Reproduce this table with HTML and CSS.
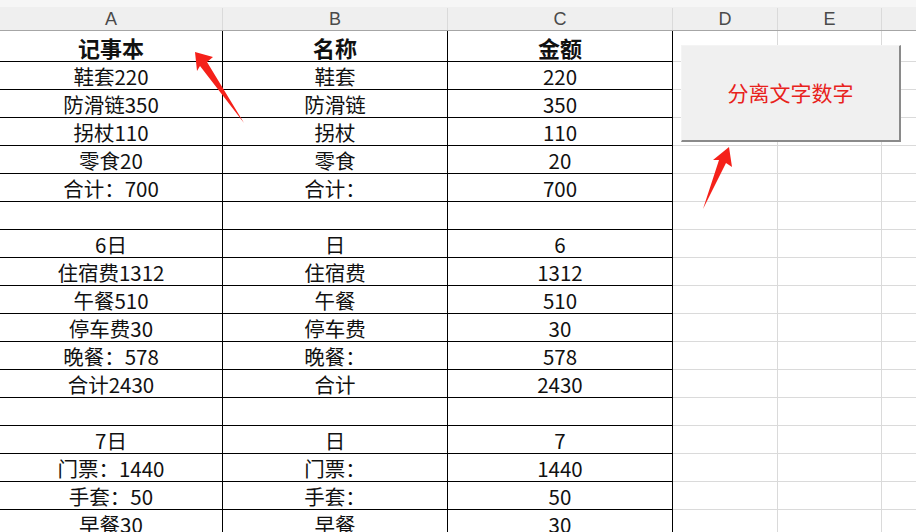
FILE: index.html
```html
<!DOCTYPE html>
<html lang="zh">
<head>
<meta charset="utf-8">
<link rel="stylesheet" href="styles.css">
</head>
<body>
<div class="sheet">
  <div class="colhead">
    <div class="hc ca">A</div>
    <div class="hc cb">B</div>
    <div class="hc cc">C</div>
    <div class="hc cd">D</div>
    <div class="hc ce">E</div>
    <div class="hc cf"></div>
  </div>
  <div class="grid">
    <div class="row first bold"><div class="c ca">记事本</div><div class="c cb">名称</div><div class="c cc">金额</div><div class="g cd"></div><div class="g ce"></div><div class="g cf"></div></div>
    <div class="row"><div class="c ca">鞋套220</div><div class="c cb">鞋套</div><div class="c cc">220</div><div class="g cd"></div><div class="g ce"></div><div class="g cf"></div></div>
    <div class="row"><div class="c ca">防滑链350</div><div class="c cb">防滑链</div><div class="c cc">350</div><div class="g cd"></div><div class="g ce"></div><div class="g cf"></div></div>
    <div class="row"><div class="c ca">拐杖110</div><div class="c cb">拐杖</div><div class="c cc">110</div><div class="g cd"></div><div class="g ce"></div><div class="g cf"></div></div>
    <div class="row"><div class="c ca">零食20</div><div class="c cb">零食</div><div class="c cc">20</div><div class="g cd"></div><div class="g ce"></div><div class="g cf"></div></div>
    <div class="row"><div class="c ca">合计：700</div><div class="c cb">合计：</div><div class="c cc">700</div><div class="g cd"></div><div class="g ce"></div><div class="g cf"></div></div>
    <div class="row"><div class="c ca"></div><div class="c cb"></div><div class="c cc"></div><div class="g cd"></div><div class="g ce"></div><div class="g cf"></div></div>
    <div class="row"><div class="c ca">6日</div><div class="c cb">日</div><div class="c cc">6</div><div class="g cd"></div><div class="g ce"></div><div class="g cf"></div></div>
    <div class="row"><div class="c ca">住宿费1312</div><div class="c cb">住宿费</div><div class="c cc">1312</div><div class="g cd"></div><div class="g ce"></div><div class="g cf"></div></div>
    <div class="row"><div class="c ca">午餐510</div><div class="c cb">午餐</div><div class="c cc">510</div><div class="g cd"></div><div class="g ce"></div><div class="g cf"></div></div>
    <div class="row"><div class="c ca">停车费30</div><div class="c cb">停车费</div><div class="c cc">30</div><div class="g cd"></div><div class="g ce"></div><div class="g cf"></div></div>
    <div class="row"><div class="c ca">晚餐：578</div><div class="c cb">晚餐：</div><div class="c cc">578</div><div class="g cd"></div><div class="g ce"></div><div class="g cf"></div></div>
    <div class="row"><div class="c ca">合计2430</div><div class="c cb">合计</div><div class="c cc">2430</div><div class="g cd"></div><div class="g ce"></div><div class="g cf"></div></div>
    <div class="row"><div class="c ca"></div><div class="c cb"></div><div class="c cc"></div><div class="g cd"></div><div class="g ce"></div><div class="g cf"></div></div>
    <div class="row"><div class="c ca">7日</div><div class="c cb">日</div><div class="c cc">7</div><div class="g cd"></div><div class="g ce"></div><div class="g cf"></div></div>
    <div class="row"><div class="c ca">门票：1440</div><div class="c cb">门票：</div><div class="c cc">1440</div><div class="g cd"></div><div class="g ce"></div><div class="g cf"></div></div>
    <div class="row"><div class="c ca">手套：50</div><div class="c cb">手套：</div><div class="c cc">50</div><div class="g cd"></div><div class="g ce"></div><div class="g cf"></div></div>
    <div class="row"><div class="c ca">早餐30</div><div class="c cb">早餐</div><div class="c cc">30</div><div class="g cd"></div><div class="g ce"></div><div class="g cf"></div></div>
  </div>
  <div class="btn">分离文字数字</div>
  <svg class="arrows" width="916" height="532" viewBox="0 0 916 532">
    <polygon points="195,52 213,57 207,62 244,123 200,66 197,71" fill="#f5211a"/>
    <polygon points="729,147 732,167 726,163 703,209 719,160 713,160" fill="#f5211a"/>
  </svg>
</div>
</body>
</html>
```

FILE: styles.css
```css
html, body {
  margin: 0;
  padding: 0;
  background: #fff;
  overflow: hidden;
}
.sheet {
  position: relative;
  width: 916px;
  height: 532px;
  overflow: hidden;
  font-family: "Noto Sans CJK SC", "Noto Sans", sans-serif;
}
.colhead {
  display: flex;
  height: 31px;
  box-sizing: border-box;
  padding-top: 8px;
  background: linear-gradient(#f6f6f6 0, #f6f6f6 7px, #efefef 7px);
  border-bottom: 1px solid #a6a6a6;
}
.hc {
  box-sizing: border-box;
  border-right: 1px solid #dadada;
  text-align: center;
  font-family: "Liberation Sans", Arial, sans-serif;
  font-size: 18px;
  line-height: 22px;
  color: #4a4a4a;
}
.ca { width: 223px; flex: none; }
.cb { width: 225px; flex: none; }
.cc { width: 225px; flex: none; }
.cd { width: 105px; flex: none; }
.ce { width: 104px; flex: none; }
.cf { flex: 1; }
.hc.cf { border-right: none; }
.grid {
  display: flex;
  flex-direction: column;
}
.row {
  display: flex;
  height: 28px;
}
.row.first {
  height: 31px;
}
.c, .g {
  box-sizing: border-box;
  height: 100%;
  display: flex;
  align-items: center;
  justify-content: center;
  border-bottom: 1px solid #000;
  border-right: 1px solid #000;
  font-size: 20.5px;
  color: #111;
  white-space: nowrap;
  padding-top: 1px;
}
.g {
  border-bottom-color: #dadada;
  border-right-color: #dadada;
}
.g.cf { border-right: none; }
.bold .c {
  font-weight: 700;
  font-size: 22px;
  padding-top: 2px;
}
.btn {
  position: absolute;
  left: 681px;
  top: 45px;
  width: 220px;
  height: 97px;
  box-sizing: border-box;
  background: #f0f0f0;
  border-right: 2px solid #8a8a8a;
  border-bottom: 2px solid #8a8a8a;
  border-top: 1px solid #f4f4f4;
  border-left: 1px solid #f4f4f4;
  display: flex;
  align-items: center;
  justify-content: center;
  color: #e8221c;
  font-size: 21px;
  padding-bottom: 3px;
}
.arrows {
  position: absolute;
  left: 0;
  top: 0;
  pointer-events: none;
}
```
